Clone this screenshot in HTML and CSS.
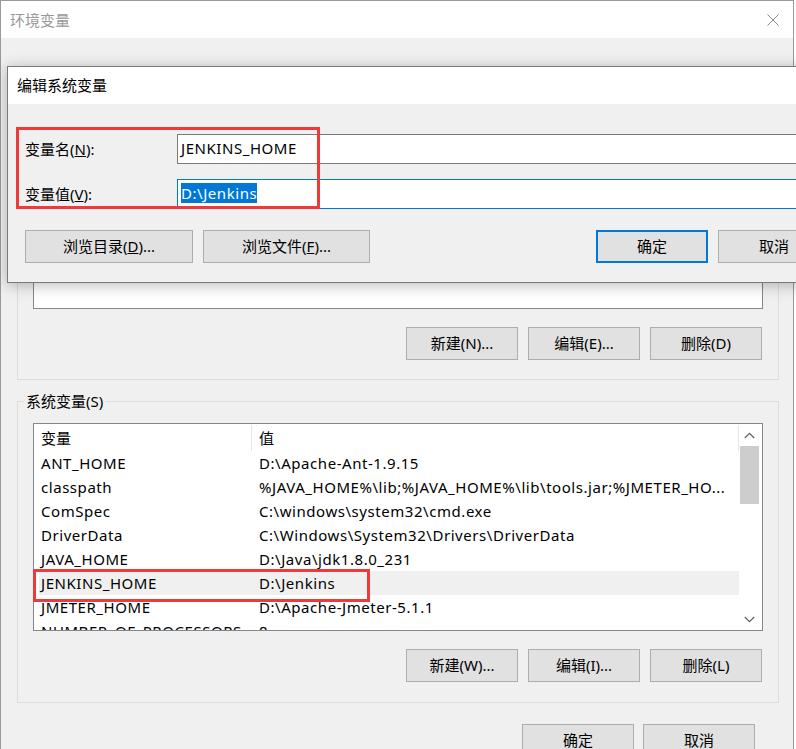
FILE: index.html
```html
<!DOCTYPE html>
<html lang="zh-CN">
<head>
<meta charset="utf-8">
<title>环境变量</title>
<link rel="stylesheet" href="styles.css">
</head>
<body>
<div class="window">
  <div class="titlebar">
    <span class="title">环境变量</span>
    <svg class="close" width="12" height="12" viewBox="0 0 12 12"><path d="M0.5 0.5L11.5 11.5M11.5 0.5L0.5 11.5" stroke="#8c8c8c" stroke-width="1" fill="none"/></svg>
  </div>
  <div class="win-body">
    <div class="group group-user">
      <div class="group-inner">
        <div class="listbox listbox-user"></div>
        <div class="btn-row">
          <button class="btn">新建(N)...</button>
          <button class="btn">编辑(E)...</button>
          <button class="btn">删除(D)</button>
        </div>
      </div>
    </div>
    <fieldset class="group group-sys">
      <legend>系统变量(S)</legend>
      <div class="group-inner">
        <div class="listbox listbox-sys">
          <div class="list-main">
            <div class="list-head"><span class="col-name">变量</span><span class="col-val">值</span></div>
            <div class="row"><span class="col-name">ANT_HOME</span><span class="col-val">D:\Apache-Ant-1.9.15</span></div>
            <div class="row"><span class="col-name">classpath</span><span class="col-val">%JAVA_HOME%\lib;%JAVA_HOME%\lib\tools.jar;%JMETER_HO...</span></div>
            <div class="row"><span class="col-name">ComSpec</span><span class="col-val">C:\windows\system32\cmd.exe</span></div>
            <div class="row"><span class="col-name">DriverData</span><span class="col-val">C:\Windows\System32\Drivers\DriverData</span></div>
            <div class="row"><span class="col-name">JAVA_HOME</span><span class="col-val">D:\Java\jdk1.8.0_231</span></div>
            <div class="row selected"><span class="col-name">JENKINS_HOME</span><span class="col-val">D:\Jenkins</span></div>
            <div class="row"><span class="col-name">JMETER_HOME</span><span class="col-val">D:\Apache-Jmeter-5.1.1</span></div>
            <div class="row"><span class="col-name">NUMBER_OF_PROCESSORS</span><span class="col-val">8</span></div>
          </div>
          <div class="scrollbar">
            <div class="sb-btn"><svg width="11" height="7" viewBox="0 0 11 7"><path d="M0.8 6L5.5 1.3L10.2 6" stroke="#606060" stroke-width="1.2" fill="none"/></svg></div>
            <div class="sb-thumb"></div>
            <div class="sb-track"></div>
            <div class="sb-btn"><svg width="11" height="7" viewBox="0 0 11 7"><path d="M0.8 1L5.5 5.7L10.2 1" stroke="#606060" stroke-width="1.2" fill="none"/></svg></div>
          </div>
        </div>
        <div class="btn-row">
          <button class="btn">新建(W)...</button>
          <button class="btn">编辑(I)...</button>
          <button class="btn">删除(L)</button>
        </div>
      </div>
    </fieldset>
    <div class="footer-row">
      <button class="btn">确定</button>
      <button class="btn">取消</button>
    </div>
  </div>
</div>

<div class="dialog">
  <div class="dialog-title">编辑系统变量</div>
  <div class="dialog-body">
    <div class="field">
      <label>变量名(<u>N</u>):</label>
      <div class="input"><span class="input-text">JENKINS_HOME</span></div>
    </div>
    <div class="field">
      <label>变量值(<u>V</u>):</label>
      <div class="input focus"><span class="input-text sel">D:\Jenkins</span></div>
    </div>
    <div class="dialog-btns">
      <button class="btn btn-wide">浏览目录(<u>D</u>)...</button>
      <button class="btn btn-wide2">浏览文件(<u>F</u>)...</button>
      <button class="btn btn-default push-right">确定</button>
      <button class="btn">取消</button>
    </div>
  </div>
</div>

<div class="mark mark-form"></div>
<div class="mark mark-row"></div>
</body>
</html>
```

FILE: styles.css
```css
html, body {
  margin: 0;
  padding: 0;
  background: #ffffff;
}
body {
  width: 796px;
  height: 749px;
  overflow: hidden;
  position: relative;
  font-family: "Noto Sans", "Noto Sans CJK SC", sans-serif;
  font-size: 15px;
  color: #000;
}

/* ---------- outer window ---------- */
.window {
  width: 794px;
  height: 780px;
  box-sizing: border-box;
  border: 1px solid #9a9a9a;
  border-bottom: none;
  background: #f0f0f0;
}
.titlebar {
  height: 37px;
  background: #fff;
  display: flex;
  align-items: center;
  justify-content: space-between;
  padding: 0 14px 0 9px;
}
.title {
  color: #999;
  line-height: 20px;
}
.close { display: block; }

.win-body {
  padding-top: 50px;
}
.group {
  margin: 0 0 0 16px;
  width: 762px;
  box-sizing: border-box;
  padding: 0;
  border: 1px solid #dcdcdc;
  min-width: 0;
}
.group legend {
  margin-left: 6px;
  padding: 0 2px;
  line-height: 20px;
  height: 20px;
}
.group-inner {
  padding: 12px 15px 19px;
}
.group-user .group-inner { padding-top: 21px; }
.group-sys { margin-top: 11px; }
.group-sys .group-inner { padding-bottom: 20px; }

.listbox {
  box-sizing: border-box;
  border: 1px solid #828790;
  background: #fff;
}
.listbox-user { height: 199px; }
.listbox-sys {
  height: 208px;
  display: flex;
}
.list-main {
  flex: 1;
  overflow: hidden;
  padding-left: 5px;
}
.list-head, .row {
  display: flex;
  white-space: nowrap;
}
.list-head {
  height: 27px;
  align-items: center;
}
.list-head .col-name,
.list-head .col-val {
  border-right: 1px solid #e5e5e5;
  line-height: 26px;
}
.col-name {
  width: 213px;
  flex: none;
  box-sizing: border-box;
  padding-left: 2px;
  overflow: hidden;
}
.col-val {
  flex: 1;
  padding-left: 7px;
  overflow: hidden;
}
.row {
  height: 24px;
  line-height: 24px;
  letter-spacing: 0.55px;
}
.row.selected { background: #f0f0f0; }

.scrollbar {
  width: 23px;
  flex: none;
  display: flex;
  flex-direction: column;
  background: #fff;
}
.sb-btn {
  height: 22px;
  display: flex;
  align-items: center;
  justify-content: center;
  padding-right: 2px;
}
.sb-btn svg { display: block; }
.sb-thumb {
  height: 58px;
  margin: 0 3px 0 1px;
  background: #cdcdcd;
}
.sb-track { flex: 1; }

.btn-row {
  display: flex;
  justify-content: flex-end;
  gap: 10px;
  margin-top: 18px;
  padding-right: 1px;
}
.btn {
  width: 112px;
  height: 33px;
  box-sizing: border-box;
  border: 1px solid #adadad;
  background: #e1e1e1;
  font: inherit;
  color: #000;
  padding: 0 0 2px;
  margin: 0;
  line-height: 20px;
}
.footer-row {
  display: flex;
  justify-content: flex-end;
  gap: 9px;
  margin-top: 21px;
  padding-right: 38px;
}

/* ---------- edit dialog (on top) ---------- */
.dialog {
  position: absolute;
  left: 7px;
  top: 66px;
  width: 840px;
  box-sizing: border-box;
  border: 1px solid #7a7a7a;
  background: #f0f0f0;
  box-shadow: 0 2px 14px rgba(0, 0, 0, 0.28);
}
.dialog-title {
  height: 37px;
  line-height: 37px;
  background: #fff;
  padding-left: 9px;
}
.dialog-body {
  padding: 30px 16px 19px 17px;
}
.field {
  display: flex;
  align-items: center;
  height: 30px;
}
.field + .field { margin-top: 15px; }
.field label {
  width: 152px;
  flex: none;
  line-height: 20px;
}
.input {
  flex: 1;
  height: 30px;
  box-sizing: border-box;
  border: 1px solid #7a7a7a;
  background: #fff;
  padding: 0 0 2px 3px;
  display: flex;
  align-items: center;
}
.input.focus { border-color: #0078d7; }
.input-text {
  line-height: 20px;
  white-space: nowrap;
  letter-spacing: 0.55px;
}
.sel {
  background: #0078d7;
  color: #fff;
}
.dialog-btns {
  display: flex;
  gap: 10px;
  margin-top: 21px;
}
.btn-wide { width: 168px; }
.btn-wide2 { width: 167px; }
.btn-default { border: 2px solid #0078d7; }
.push-right { margin-left: auto; }

/* ---------- red annotation boxes ---------- */
.mark {
  position: absolute;
  border: 3px solid #ef3a3a;
  box-sizing: border-box;
  pointer-events: none;
}
.mark-form {
  left: 16px;
  top: 127px;
  width: 304px;
  height: 82px;
}
.mark-row {
  left: 33px;
  top: 569px;
  width: 337px;
  height: 33px;
}
```
